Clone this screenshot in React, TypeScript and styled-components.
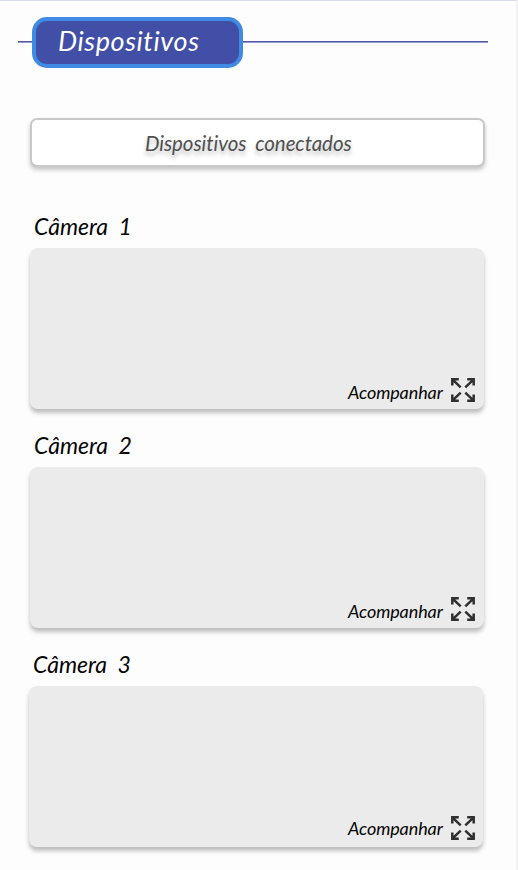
import React from "react";
import styled, { createGlobalStyle } from "styled-components";

const GlobalStyle = createGlobalStyle`
  * { box-sizing: border-box; }
  body {
    margin: 0;
    background: #fdfdfd;
    font-family: Lato, "Open Sans", sans-serif;
    font-style: italic;
    overflow: hidden;
  }
`;

const Screen = styled.main`
  width: 518px;
  height: 870px;
  padding: 16px 30px 0 18px;
  border-top: 1px solid #dadbea;
  border-right: 2px solid #f3f3f5;
  display: flex;
  flex-direction: column;
  overflow: hidden;
`;

const Header = styled.header`
  display: flex;
  align-items: center;
  width: 470px;
  height: 51px;
`;

const Rule = styled.span<{ $grow?: boolean }>`
  height: 2px;
  width: 14px;
  margin-bottom: 1px;
  flex: ${(p) => (p.$grow ? "1" : "none")};
  border-top: 1px solid #5158a8;
  border-bottom: 1px solid #9499ca;
`;

const Title = styled.h1`
  margin: 0;
  width: 211px;
  height: 51px;
  padding-left: 22px;
  border: 4px solid #3f8ae2;
  border-radius: 15px;
  background: #424fa6;
  color: #fff;
  font-size: 27px;
  font-weight: 400;
  line-height: 39px;
  letter-spacing: 0.6px;
`;

const Connected = styled.button`
  width: 455px;
  height: 49px;
  margin: 50px 0 0 12px;
  padding: 0 0 0 113px;
  border: 2px solid #c8c8c8;
  border-radius: 7px;
  background: #fff;
  box-shadow: 0 3px 4px rgba(0, 0, 0, 0.22);
  color: #505050;
  font: italic 400 20.5px Lato, sans-serif;
  line-height: 46px;
  letter-spacing: -0.05px;
  word-spacing: 4px;
  text-align: left;
  white-space: nowrap;
  text-shadow: 0 4px 4px rgba(0, 0, 0, 0.25);
`;

const CameraList = styled.section`
  display: flex;
  flex-direction: column;
  gap: 13px;
  margin-top: 36px;
`;

const Camera = styled.article<{ $shift: number }>`
  width: 454px;
  margin-left: ${(p) => 12 + p.$shift}px;
`;

const CameraName = styled.h2`
  margin: 0;
  height: 45px;
  padding-left: 4px;
  color: #050505;
  font-size: 23px;
  font-weight: 400;
  line-height: 46px;
  word-spacing: 5px;
`;

const Preview = styled.div<{ $shift: number }>`
  display: flex;
  align-items: flex-end;
  justify-content: flex-end;
  gap: 8px;
  height: 161px;
  padding: 0 ${(p) => 8 + p.$shift}px 6px 0;
  border-radius: 8px;
  background: #ebebeb;
  box-shadow: 0 4px 4px rgba(0, 0, 0, 0.25);
`;

const Follow = styled.span<{ $lift: number }>`
  width: 94px;
  margin-bottom: ${(p) => p.$lift}px;
  color: #050505;
  font-size: 18px;
  line-height: 22px;
  letter-spacing: -0.1px;
  white-space: nowrap;
`;

const Icon = styled.svg`
  display: block;
  width: 26px;
  height: 26px;
`;

const ExpandIcon = () => (
  <Icon viewBox="0 0 26 26" fill="none" stroke="#303030" strokeWidth="2.5" aria-hidden="true">
    <path d="M2.3 8.6V2.3H8.8M2.6 2.6L10.7 10.4" />
    <path d="M17.2 2.3H23.7V8.6M23.4 2.6L15.3 10.4" />
    <path d="M2.3 17.4V23.7H8.8M2.6 23.4L10.7 15.6" />
    <path d="M17.2 23.7H23.7V17.4M23.4 23.4L15.3 15.6" />
  </Icon>
);

const cameras = [
  { name: "Câmera 1", shift: 0, lift: 0 },
  { name: "Câmera 2", shift: 0, lift: 0 },
  { name: "Câmera 3", shift: -1, lift: 2 },
];

export default function App() {
  return (
    <>
      <GlobalStyle />
      <Screen>
        <Header>
          <Rule />
          <Title>Dispositivos</Title>
          <Rule $grow />
        </Header>
        <Connected>Dispositivos conectados</Connected>
        <CameraList>
          {cameras.map((c) => (
            <Camera key={c.name} $shift={c.shift}>
              <CameraName>{c.name}</CameraName>
              <Preview $shift={c.shift}>
                <Follow $lift={c.lift}>Acompanhar</Follow>
                <ExpandIcon />
              </Preview>
            </Camera>
          ))}
        </CameraList>
      </Screen>
    </>
  );
}
